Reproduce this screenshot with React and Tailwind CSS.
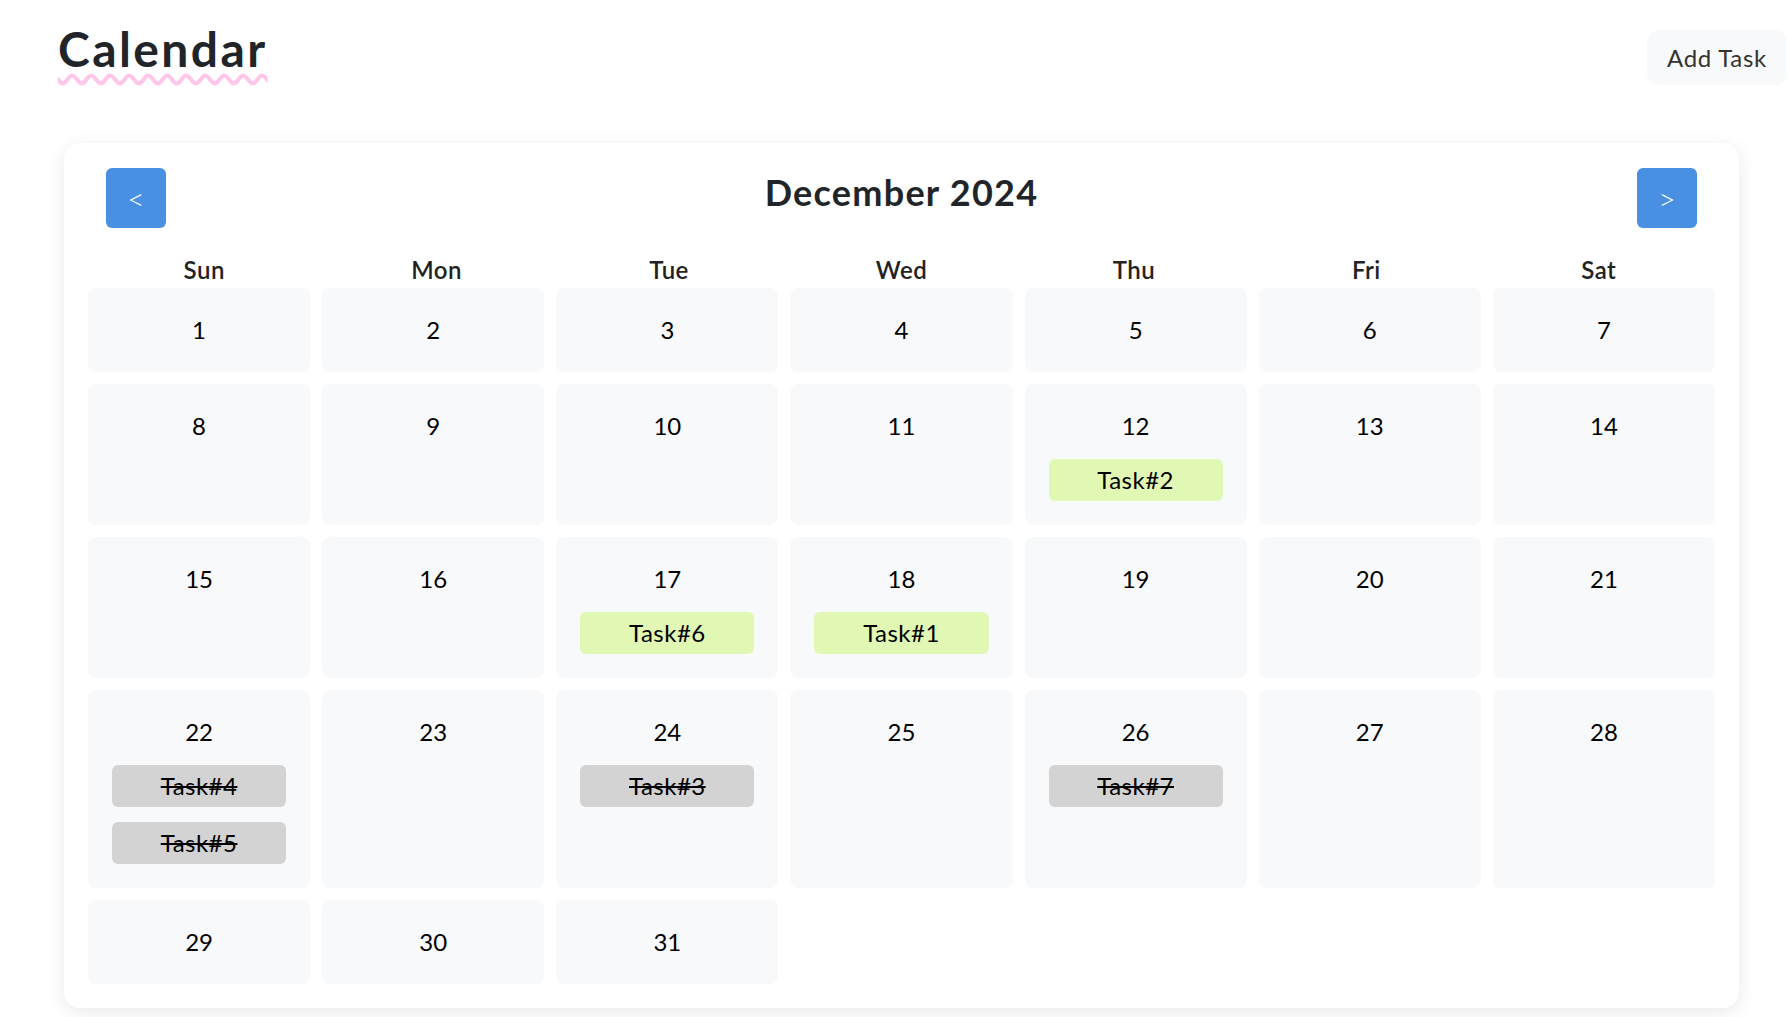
import React from "react";

const tasks = {
  12: [{ name: "Task#2", done: false }],
  17: [{ name: "Task#6", done: false }],
  18: [{ name: "Task#1", done: false }],
  22: [
    { name: "Task#4", done: true },
    { name: "Task#5", done: true },
  ],
  24: [{ name: "Task#3", done: true }],
  26: [{ name: "Task#7", done: true }],
};

const weekDays = ["Sun", "Mon", "Tue", "Wed", "Thu", "Fri", "Sat"];

const DayCell = ({ day }) => {
  const list = tasks[day] || [];
  return (
    <div className="bg-[#f8f9fa] rounded-[8px] px-[24px] pt-[24px] pb-[24px] text-center">
      <div className="text-[24px] leading-[36px] text-black">{day}</div>
      {list.map((t) => (
        <div
          key={t.name}
          className={
            t.done
              ? "mt-[15px] h-[42px] flex items-center justify-center rounded-[6px] bg-[#d3d3d3] text-[24px] tracking-[0.02em] text-black line-through"
              : "mt-[15px] h-[42px] flex items-center justify-center rounded-[6px] bg-[#e0f8b4] text-[24px] tracking-[0.02em] text-black"
          }
        >
          {t.name}
        </div>
      ))}
    </div>
  );
};

const App = () => {
  const days = Array.from({ length: 31 }, (_, i) => i + 1);

  return (
    <div
      className="min-h-screen bg-white pb-[9px]"
      style={{ fontFamily: "Lato, 'Open Sans', sans-serif" }}
    >
      {/* top header */}
      <div className="flex flex-row items-start justify-between pt-[25px] pl-[58px] pr-[1px]">
        <h1 className="text-[48px] leading-none font-bold tracking-[0.05em] text-[#212529] underline decoration-wavy decoration-[#ffc6ea] decoration-[4px] underline-offset-[7px]">
          Calendar
        </h1>
        <button className="mt-[5px] h-[55px] px-[20px] rounded-[12px] bg-[#f8f9fa] text-[24px] tracking-[0.03em] text-[#333333]">
          Add Task
        </button>
      </div>

      {/* calendar card */}
      <div className="mt-[58px] ml-[64px] w-[1675px] bg-white rounded-[16px] shadow-[0_4px_18px_rgba(0,0,0,0.09)] px-[24px] pt-[25px] pb-[24px]">
        <div className="flex flex-row items-center justify-between px-[18px] mb-[24px]">
          <button className="w-[60px] h-[60px] rounded-[6px] bg-[#4a90e2] text-white text-[30px] font-light leading-none">
            {"<"}
          </button>
          <h2 className="text-[36px] font-bold tracking-[0.035em] text-[#212529] leading-[44px] mb-[12px]">
            December 2024
          </h2>
          <button className="w-[60px] h-[60px] rounded-[6px] bg-[#4a90e2] text-white text-[30px] font-light leading-none">
            {">"}
          </button>
        </div>

        <div className="grid grid-cols-7 text-center">
          {weekDays.map((d) => (
            <div
              key={d}
              className="text-[24px] leading-[36px] font-semibold tracking-[0.02em] text-[#222222]"
            >
              {d}
            </div>
          ))}
        </div>

        <div className="grid grid-cols-7 gap-[12px]">
          {days.map((d) => (
            <DayCell key={d} day={d} />
          ))}
        </div>
      </div>
    </div>
  );
};

export default App;
